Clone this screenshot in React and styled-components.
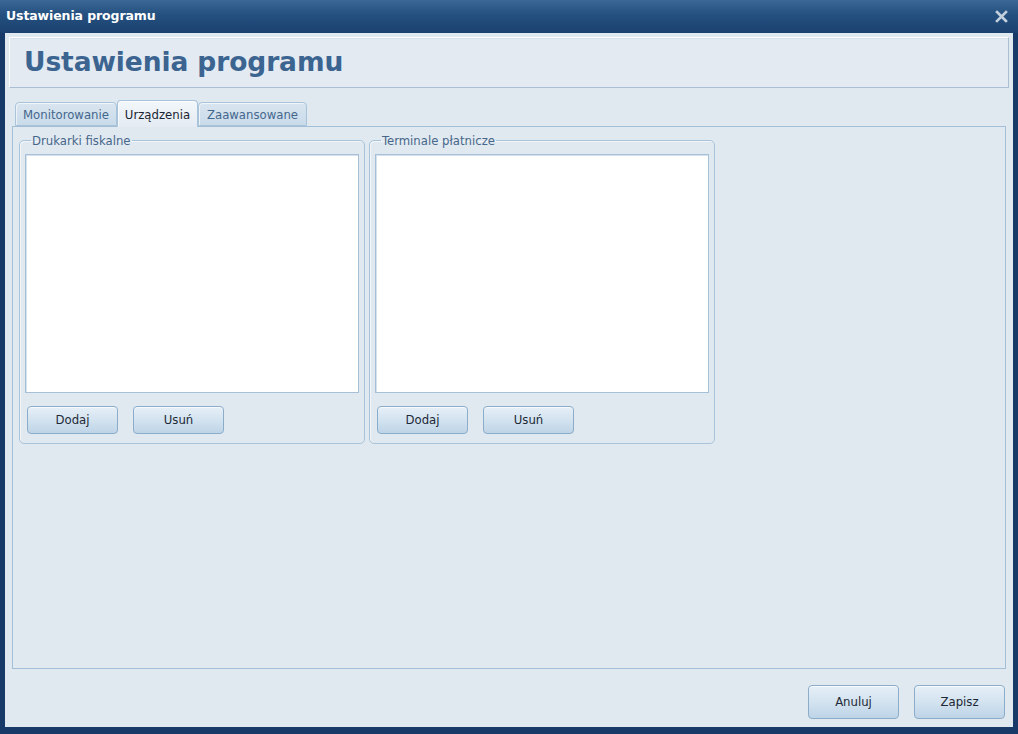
import React from "react";
import styled, { createGlobalStyle } from "styled-components";

const GlobalStyle = createGlobalStyle`
  html, body {
    margin: 0;
    padding: 0;
    background: #183a68;
  }
  * {
    box-sizing: border-box;
  }
`;

const font = `"DejaVu Sans Condensed", "DejaVu Sans", "Liberation Sans", sans-serif`;

const Window = styled.div`
  width: 1018px;
  height: 734px;
  display: flex;
  flex-direction: column;
  background: #183a68;
  font-family: ${font};
`;

const TitleBar = styled.div`
  height: 33px;
  flex: none;
  display: flex;
  align-items: center;
  justify-content: space-between;
  padding: 0 10px 3px 6px;
  background: linear-gradient(to bottom, #3a6796 0%, #24507f 45%, #1b416f 100%);
`;

const TitleText = styled.div`
  color: #ffffff;
  font-family: "DejaVu Sans", sans-serif;
  font-weight: bold;
  font-size: 12.5px;
  letter-spacing: -0.1px;
`;

const CloseIcon = styled.svg`
  width: 13px;
  height: 13px;
  margin-top: 2px;
`;

const Body = styled.div`
  flex: 1;
  margin: 0 5px 7px 5px;
  background: #e0e8f0;
  display: flex;
  flex-direction: column;
  padding: 4px 4px 0 4px;
`;

const Header = styled.div`
  height: 51px;
  flex: none;
  display: flex;
  align-items: center;
  padding: 0 0 2px 14px;
  background: #e3eaf2;
  border-top: 1px solid #fbfdff;
  border-left: 1px solid #fbfdff;
  border-right: 1px solid #aabfd4;
  border-bottom: 1px solid #aabfd4;
  box-shadow: inset 0 1px 0 #d6e1ec;
`;

const HeaderTitle = styled.h1`
  margin: 0;
  font-family: "DejaVu Sans", sans-serif;
  font-weight: bold;
  font-size: 26.5px;
  color: #3b6490;
  letter-spacing: -0.1px;
`;

const TabArea = styled.div`
  flex: 1;
  display: flex;
  flex-direction: column;
  margin: 12px 3px 0 3px;
`;

const TabStrip = styled.div`
  display: flex;
  align-items: flex-end;
  height: 26px;
  padding-left: 3px;
  position: relative;
  z-index: 1;
`;

const Tab = styled.div`
  width: ${(p) => p.$w}px;
  height: ${(p) => (p.$active ? 27 : 24)}px;
  margin-bottom: ${(p) => (p.$active ? -1 : 0)}px;
  display: flex;
  align-items: center;
  justify-content: center;
  padding-top: ${(p) => (p.$active ? 0 : 1)}px;
  font-size: 13px;
  color: ${(p) => (p.$active ? "#1b2430" : "#44678c")};
  border: 1px solid #a9c3da;
  border-bottom: ${(p) => (p.$active ? "none" : "1px solid #a9c3da")};
  border-radius: 4px 4px 0 0;
  background: ${(p) =>
    p.$active
      ? "linear-gradient(to bottom, #f3f7fb 0%, #e4ebf3 100%)"
      : "linear-gradient(to bottom, #d9e5f0 0%, #c9dbea 100%)"};
  box-shadow: inset 1px 1px 0 rgba(255, 255, 255, 0.6);
`;

const TabPane = styled.div`
  flex: 1;
  border: 1px solid #a3bfd8;
  background: #e0e8f0;
  padding: 6px 6px;
  display: flex;
  align-items: flex-start;
  gap: 4px;
`;

const Group = styled.fieldset`
  width: 346px;
  height: 311px;
  margin: 0;
  padding: 6px 5px 0 5px;
  border: 1px solid #a8c3da;
  border-radius: 5px;
  box-shadow: inset 1px 1px 0 #f2f6fa;
  display: flex;
  flex-direction: column;
  min-width: 0;
`;

const Legend = styled.legend`
  margin-left: 6px;
  padding: 0 1px;
  font-size: 13px;
  color: #46678a;
  line-height: 15px;
`;

const ListBox = styled.div`
  height: 239px;
  flex: none;
  background: #ffffff;
  border: 1px solid #a6c0d7;
  box-shadow: inset 1px 1px 0 #d5e2ee;
`;

const ButtonRow = styled.div`
  display: flex;
  gap: 15px;
  padding: 13px 0 0 2px;
`;

const Button = styled.button`
  width: 91px;
  height: ${(p) => p.$h || 28}px;
  font-family: ${font};
  font-size: 13px;
  color: #1d2936;
  border: 1px solid #8badca;
  border-radius: 4px;
  background: linear-gradient(to bottom, #e6eff7 0%, #d3e3f0 50%, #bed4e7 100%);
  box-shadow: inset 0 1px 0 #f6fafd;
  padding: 0 0 1px 0;
  cursor: pointer;
`;

const Footer = styled.div`
  height: 58px;
  flex: none;
  display: flex;
  justify-content: flex-end;
  align-items: flex-start;
  gap: 15px;
  padding: 16px 4px 0 0;
`;

function DeviceGroup({ title }) {
  return (
    <Group>
      <Legend>{title}</Legend>
      <ListBox />
      <ButtonRow>
        <Button>Dodaj</Button>
        <Button>Usuń</Button>
      </ButtonRow>
    </Group>
  );
}

export default function App() {
  return (
    <>
      <GlobalStyle />
      <Window>
        <TitleBar>
          <TitleText>Ustawienia programu</TitleText>
          <CloseIcon viewBox="0 0 13 13">
            <path
              d="M2 2 L11 11 M11 2 L2 11"
              stroke="#c3d0de"
              strokeWidth="2.6"
              strokeLinecap="square"
            />
          </CloseIcon>
        </TitleBar>
        <Body>
          <Header>
            <HeaderTitle>Ustawienia programu</HeaderTitle>
          </Header>
          <TabArea>
            <TabStrip>
              <Tab $w={102}>Monitorowanie</Tab>
              <Tab $w={81} $active>
                Urządzenia
              </Tab>
              <Tab $w={109}>Zaawansowane</Tab>
            </TabStrip>
            <TabPane>
              <DeviceGroup title="Drukarki fiskalne" />
              <DeviceGroup title="Terminale płatnicze" />
            </TabPane>
          </TabArea>
          <Footer>
            <Button $h={34}>Anuluj</Button>
            <Button $h={34}>Zapisz</Button>
          </Footer>
        </Body>
      </Window>
    </>
  );
}
